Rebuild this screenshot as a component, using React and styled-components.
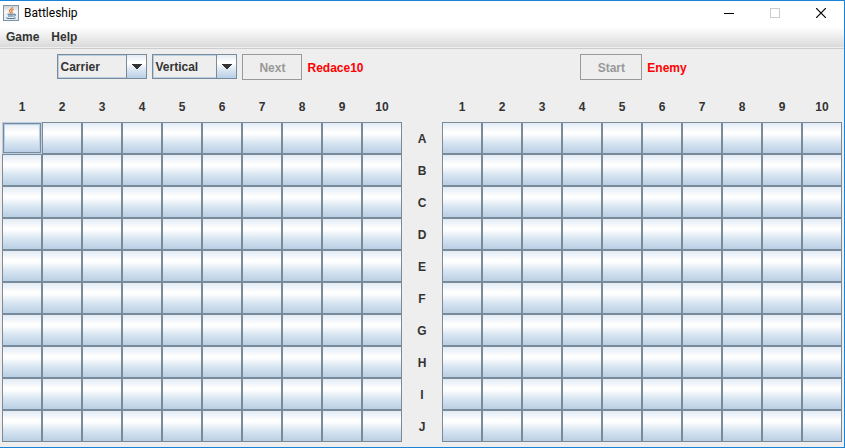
import React from "react";
import styled, { createGlobalStyle } from "styled-components";

const GlobalStyle = createGlobalStyle`
  * { box-sizing: border-box; }
  body {
    margin: 0;
    background: #eeeeee;
    color: #333333;
    font: bold 12px/16px "Liberation Sans", Arial, sans-serif;
  }
  button, select { font: inherit; color: inherit; margin: 0; }
`;

const metal = "linear-gradient(#e1eaf4 0%, #ffffff 30%, #ffffff 36%, #dde8f3 62%, #b8cfe5 100%)";

const Frame = styled.div`
  display: flex;
  flex-direction: column;
  min-height: 100vh;
  border: solid #1883d7;
  border-width: 1px 1px 1px 0;
`;

const TitleBar = styled.header`
  display: flex;
  align-items: center;
  height: 26px;
  padding: 0 0 2px 3px;
  background: #ffffff;
`;

const Title = styled.h1`
  flex: 1;
  margin: 0 0 0 5px;
  color: #000000;
  font: 12px/16px Roboto, "Segoe UI", sans-serif;
`;

const WindowButton = styled.button`
  display: grid;
  place-items: center;
  width: 46px;
  height: 24px;
  padding: 0;
  border: 0;
  background: transparent;
  color: ${({ disabled }) => (disabled ? "#cccccc" : "#000000")};
`;

const MenuBar = styled.nav`
  display: flex;
  align-items: center;
  height: 22px;
  border-bottom: 1px solid #cccccc;
  background: linear-gradient(#ffffff, #dadada 20px, #eeeeee 20px);
`;

const MenuItem = styled.button`
  padding: 0 6px 2px;
  border: 0;
  background: transparent;
`;

const Toolbars = styled.div`
  display: grid;
  grid-template-columns: 1fr 1fr;
  column-gap: 2px;
  height: 41px;
`;

const Toolbar = styled.section`
  display: flex;
  justify-content: center;
  align-items: flex-start;
  gap: 5px;
  padding-top: 5px;
`;

const Combo = styled.label`
  display: grid;
  grid-template-columns: 1fr 20px;
  width: ${({ $width }) => $width}px;
  height: 25px;
  border: 1px solid #7a8a99;
`;

const Select = styled.select`
  grid-area: 1 / 1 / 2 / 3;
  width: 100%;
  padding: 1px 20px 0 1px;
  border: 1px solid #b8cfe5;
  border-radius: 0;
  background: #eeeeee;
  appearance: none;
`;

const ComboArrow = styled.span`
  grid-area: 1 / 2;
  z-index: 1;
  display: grid;
  place-items: center;
  border-left: 1px solid #7a8a99;
  background: ${metal};
  pointer-events: none;
`;

const ActionButton = styled.button`
  width: ${({ $width }) => $width}px;
  height: 26px;
  padding: 2px 0 0;
  border: 1px solid #999999;
  background: #eeeeee;
  &:disabled { color: #999999; }
`;

const PlayerName = styled.span`
  color: #ff0000;
  line-height: 28px;
`;

const Boards = styled.main`
  display: grid;
  grid-template-columns: repeat(21, minmax(0, 1fr));
  grid-auto-rows: 32px;
  padding: 0 2px;
`;

const Heading = styled.span`
  display: grid;
  place-items: center;
  padding-top: 2px;
`;

const Cell = styled.button`
  padding: 0;
  border: 1px solid #7a8a99;
  background: ${metal};
  ${({ $focused }) =>
    $focused &&
    `
    border-color: #b8cfe5;
    box-shadow: inset 0 0 0 1px #7a8a99, inset 0 0 0 2px #b8cfe5;
  `}
  &:focus { outline: 0; }
`;

const JavaIcon = () => (
  <svg width="16" height="16" viewBox="0 0 16 16" fill="none" aria-hidden="true">
    <defs>
      <linearGradient id="tile" x1="0" y1="0" x2="0" y2="1">
        <stop offset="0" stopColor="#c4cfd8" />
        <stop offset="0.4" stopColor="#f6f8fa" />
        <stop offset="1" stopColor="#e2e8ed" />
      </linearGradient>
    </defs>
    <rect x="0.5" y="0.5" width="15" height="15" fill="url(#tile)" stroke="#8194a3" />
    <path d="M9.4 2C10 4 6 4.5 6.5 6.2C6.7 7 7.5 7.4 7.7 8.3M10.8 4.3C8.7 5 8.2 5.8 9 6.7C9.4 7.2 9.2 7.8 8.7 8.3" stroke="#e87524" strokeWidth="1.2" />
    <path d="M4.5 9.2H11M5 11H10.4M10.9 9.2C13.3 8.7 13 11 10.8 11.2M3.4 12.5C2.8 13.9 12.6 13.9 12.8 12.7" stroke="#3f6c92" />
  </svg>
);

const MinimizeIcon = () => (
  <svg width="10" height="10" viewBox="0 0 10 10" aria-hidden="true">
    <path d="M0 5h10v1H0z" fill="currentColor" />
  </svg>
);

const MaximizeIcon = () => (
  <svg width="10" height="10" viewBox="0 0 10 10" aria-hidden="true">
    <rect x="0.5" y="0.5" width="9" height="9" fill="none" stroke="currentColor" />
  </svg>
);

const CloseIcon = () => (
  <svg width="10" height="10" viewBox="0 0 10 10" aria-hidden="true">
    <path d="M0 0l10 10M10 0L0 10" fill="none" stroke="currentColor" strokeWidth="1.2" />
  </svg>
);

const DropDown = ({ label, width, options }) => (
  <Combo $width={width}>
    <Select aria-label={label}>
      {options.map((option) => (
        <option key={option}>{option}</option>
      ))}
    </Select>
    <ComboArrow>
      <svg width="10" height="5" viewBox="0 0 10 5" shapeRendering="crispEdges" aria-hidden="true">
        <path d="M0 0h10v1H9v1H8v1H7v1H6v1H4V4H3V3H2V2H1V1H0z" fill="#333333" />
      </svg>
    </ComboArrow>
  </Combo>
);

const columns = Array.from({ length: 10 }, (_, i) => i + 1);
const rows = [..."ABCDEFGHIJ"];

const ColumnHeadings = () => columns.map((n) => <Heading key={n}>{n}</Heading>);

const BoardRow = ({ owner, row, focusedColumn }) =>
  columns.map((n) => (
    <Cell key={n} aria-label={`${owner} ${row}${n}`} $focused={n === focusedColumn} />
  ));

export default function App() {
  return (
    <Frame>
      <GlobalStyle />
      <TitleBar>
        <JavaIcon />
        <Title>Battleship</Title>
        <WindowButton aria-label="Minimize"><MinimizeIcon /></WindowButton>
        <WindowButton aria-label="Maximize" disabled><MaximizeIcon /></WindowButton>
        <WindowButton aria-label="Close"><CloseIcon /></WindowButton>
      </TitleBar>
      <MenuBar>
        <MenuItem>Game</MenuItem>
        <MenuItem>Help</MenuItem>
      </MenuBar>
      <Toolbars>
        <Toolbar>
          <DropDown label="Ship" width={90} options={["Carrier", "Battleship", "Cruiser", "Submarine", "Destroyer"]} />
          <DropDown label="Direction" width={85} options={["Vertical", "Horizontal"]} />
          <ActionButton $width={60} disabled>Next</ActionButton>
          <PlayerName>Redace10</PlayerName>
        </Toolbar>
        <Toolbar>
          <ActionButton $width={62} disabled>Start</ActionButton>
          <PlayerName>Enemy</PlayerName>
        </Toolbar>
      </Toolbars>
      <Boards>
        <ColumnHeadings />
        <span />
        <ColumnHeadings />
        {rows.map((row) => (
          <React.Fragment key={row}>
            <BoardRow owner="Own" row={row} focusedColumn={row === "A" ? 1 : undefined} />
            <Heading>{row}</Heading>
            <BoardRow owner="Enemy" row={row} />
          </React.Fragment>
        ))}
      </Boards>
    </Frame>
  );
}
